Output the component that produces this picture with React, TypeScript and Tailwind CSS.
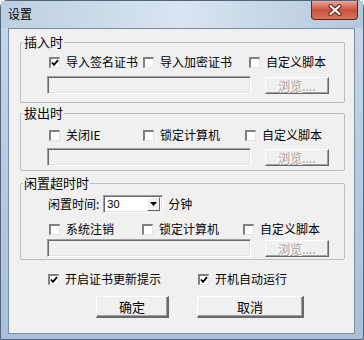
import React from "react";

const FONT = "font-['Noto_Sans_CJK_SC','Noto_Sans_CJK_JP',sans-serif]";

function CheckBox({ checked, label, w }: { checked?: boolean; label: string; w: string }) {
  return (
    <div className={`flex items-center h-[16px] ${w}`}>
      <div className="w-[11px] h-[11px] shrink-0 bg-white border-t-2 border-l-2 border-t-[#808080] border-l-[#808080] border-b border-r border-b-[#e3e3e3] border-r-[#e3e3e3] flex items-center justify-center">
        {checked && (
          <svg width="8" height="8" viewBox="0 0 8 8">
            <path d="M1 3.5 L3 5.8 L7 1.2" stroke="#000" strokeWidth="1.9" fill="none" />
          </svg>
        )}
      </div>
      <span className="ml-[6px] text-[12px] leading-[16px] text-black whitespace-nowrap">{label}</span>
    </div>
  );
}

function PathRow() {
  return (
    <div className="flex items-center">
      <div className="w-[204px] h-[18px] bg-[#f0f0f0] border-t border-l border-t-[#a0a0a0] border-l-[#a0a0a0] border-b border-r border-b-white border-r-white shadow-[inset_1px_1px_0_#696969,inset_-1px_-1px_0_#e3e3e3]" />
      <div className="ml-[14px] w-[64px] h-[17px] bg-[#f0f0f0] border-t border-l border-t-white border-l-white border-b border-r border-b-[#696969] border-r-[#696969] shadow-[inset_-1px_-1px_0_#a0a0a0] flex items-center justify-center text-[12px] leading-[15px] text-[#a0a0a0] [text-shadow:1px_1px_0_#fff]">
        浏览....
      </div>
    </div>
  );
}

function Group({ title, className, children }: { title: string; className: string; children: React.ReactNode }) {
  return (
    <fieldset className={`w-[325px] ml-[11px] border border-[#b9bec4] rounded-[2px] ${className}`}>
      <legend className="ml-[2px] px-[1px] text-[13px] leading-[16px] text-black">{title}</legend>
      <div className="pl-[26px]">{children}</div>
    </fieldset>
  );
}

function Button({ label, w }: { label: string; w: string }) {
  return (
    <div className={`${w} h-[22px] bg-[#f0f0f0] border-t border-l border-t-white border-l-white border-b-2 border-r-2 border-b-[#696969] border-r-[#696969] shadow-[inset_-1px_-1px_0_#a0a0a0] flex items-center justify-center text-[13px] leading-[16px] text-black`}>
      {label}
    </div>
  );
}

export default function App() {
  return (
    <div className={`w-[364px] h-[340px] flex flex-col rounded-t-[7px] border border-[#52667b] bg-gradient-to-b from-[#c6d8ea] via-[#b6cbe1] to-[#a8c0da] ${FONT}`}>
      {/* title bar */}
      <div className="h-[27px] flex items-start bg-gradient-to-r from-[#bccfe2] via-[#d9e5f0] to-[#b3c8de]">
        <span className="pl-[7px] pt-[5px] text-[12px] leading-[16px] text-black">设置</span>
        <div className="ml-auto mr-[5px] w-[47px] h-[19px] rounded-b-[4px] border border-t-0 border-[#6b2418] bg-gradient-to-b from-[#e8a796] via-[#c8503c] to-[#d9735a] flex items-center justify-center">
          <svg width="14" height="12" viewBox="0 0 14 12">
            <path d="M2.5 2 L11.5 10 M11.5 2 L2.5 10" stroke="#5a1a10" strokeWidth="4" strokeLinecap="round" />
            <path d="M2.5 2 L11.5 10 M11.5 2 L2.5 10" stroke="#fff" strokeWidth="2.2" strokeLinecap="round" />
          </svg>
        </div>
      </div>

      {/* client area */}
      <div className="ml-[7px] mr-[8px] h-[306px] bg-[#f0f0f0] border border-[#7b8da2] flex flex-col">
        <Group title="插入时" className="mt-[5px] pb-[8px]">
          <div className="mt-[4px] ml-[2px] flex">
            <CheckBox checked label="导入签名证书" w="w-[94px]" />
            <CheckBox label="导入加密证书" w="w-[106px]" />
            <CheckBox label="自定义脚本" w="w-[80px]" />
          </div>
          <div className="mt-[6px]">
            <PathRow />
          </div>
        </Group>

        <Group title="拔出时" className="mt-[2px] pb-[4px]">
          <div className="mt-[6px] ml-[2px] flex">
            <CheckBox label="关闭IE" w="w-[94px]" />
            <CheckBox label="锁定计算机" w="w-[102px]" />
            <CheckBox label="自定义脚本" w="w-[80px]" />
          </div>
          <div className="mt-[5px]">
            <PathRow />
          </div>
        </Group>

        <Group title="闲置超时时" className="mt-[4px] pb-[2px]">
          <div className="mt-[4px] flex items-center h-[18px]">
            <span className="ml-[1px] text-[12px] leading-[16px] text-black">闲置时间:</span>
            <div className="ml-[4px] w-[60px] h-[18px] bg-white border-t border-l border-t-[#a0a0a0] border-l-[#a0a0a0] border-b border-r border-b-white border-r-white shadow-[inset_1px_1px_0_#696969,inset_-1px_-1px_0_#e3e3e3] flex items-center">
              <span className="ml-[3px] text-[11px] leading-[14px] font-['Liberation_Sans',sans-serif] text-black">30</span>
              <div className="ml-auto mr-[2px] w-[13px] h-[14px] bg-[#f0f0f0] border-t border-l border-t-white border-l-white border-b border-r border-b-[#696969] border-r-[#696969] flex items-center justify-center">
                <svg width="7" height="4" viewBox="0 0 7 4">
                  <path d="M0 0 H7 L3.5 4 Z" fill="#000" />
                </svg>
              </div>
            </div>
            <span className="ml-[5px] text-[12px] leading-[16px] text-black">分钟</span>
          </div>
          <div className="mt-[8px] ml-[2px] flex">
            <CheckBox label="系统注销" w="w-[93px]" />
            <CheckBox label="锁定计算机" w="w-[101px]" />
            <CheckBox label="自定义脚本" w="w-[80px]" />
          </div>
          <div className="mt-[2px]">
            <PathRow />
          </div>
        </Group>

        <div className="mt-[11px] ml-[39px] flex">
          <CheckBox checked label="开启证书更新提示" w="w-[150px]" />
          <CheckBox checked label="开机自动运行" w="w-[100px]" />
        </div>

        <div className="mt-[9px] ml-[87px] flex gap-[28px]">
          <Button label="确定" w="w-[73px]" />
          <Button label="取消" w="w-[107px]" />
        </div>
      </div>
    </div>
  );
}
